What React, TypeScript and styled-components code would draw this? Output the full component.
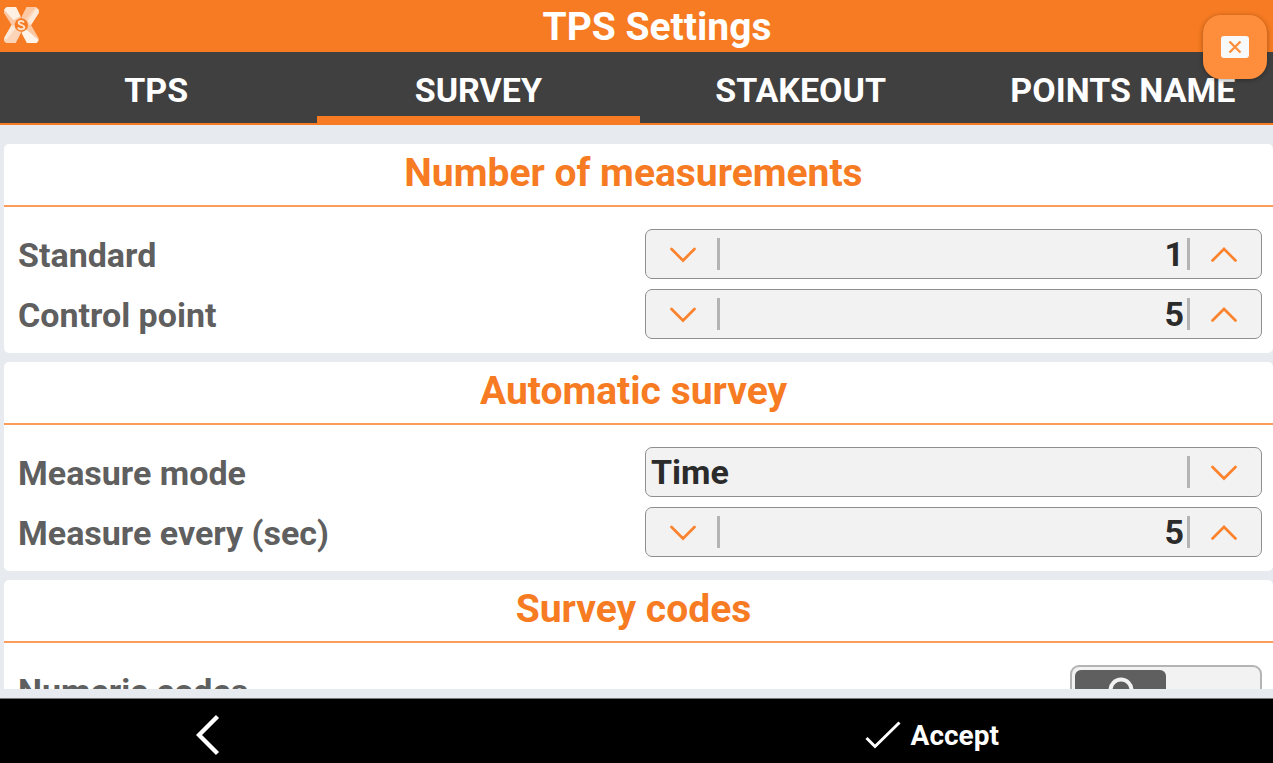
import React, { useState } from "react";
import styled, { createGlobalStyle } from "styled-components";

const orange = "#f67b22";

const GlobalStyle = createGlobalStyle`
  *, *::before, *::after { box-sizing: border-box; }
  body { margin: 0; background: #e7eaef; }
  button, input, select { font: inherit; color: inherit; margin: 0; padding: 0; border: 0; background: none; }
  button { cursor: pointer; }
`;

const Page = styled.div`
  display: flex;
  flex-direction: column;
  height: 100vh;
  overflow: hidden;
  position: relative;
  font-family: Roboto, "Liberation Sans", sans-serif;
  font-weight: 700;
  color: #5f5f5f;
`;

const Header = styled.header`
  display: flex;
  align-items: center;
  flex: none;
  height: 52px;
  padding-left: 3px;
  background: ${orange};
  color: #fff;
`;

const Title = styled.h1`
  flex: 1;
  margin: 0;
  padding-top: 2px;
  font-size: 39px;
  font-weight: 700;
  line-height: 50px;
  text-align: center;
`;

const Tabs = styled.nav`
  display: flex;
  flex: none;
  height: 73px;
  margin: 0 -11px 0 -5px;
  background: #404040;
  border-bottom: 2px solid ${orange};
`;

const Tab = styled.button<{ $active: boolean }>`
  flex: 1 1 0;
  color: #fff;
  font-size: 34px;
  line-height: 40px;
  padding-top: 11px;
  border-bottom: 7px solid ${(p) => (p.$active ? orange : "transparent")};
`;

const CloseButton = styled.button`
  position: absolute;
  top: 15px;
  right: 6px;
  width: 64px;
  height: 64px;
  display: grid;
  place-items: center;
  border-radius: 18px;
  background: #fe8e3c;
  box-shadow: 0 1px 5px rgba(0, 0, 0, 0.35);
`;

const Content = styled.main`
  flex: 1;
  min-height: 0;
  overflow: hidden;
  display: flex;
  flex-direction: column;
  gap: 9px;
  padding: 19px 0 0 4px;
`;

const Card = styled.section`
  flex: none;
  background: #fff;
  border-radius: 5px;
`;

const CardTitle = styled.h2`
  margin: 0;
  padding: 0 10px 2px 0;
  font-size: 39px;
  font-weight: 700;
  line-height: 59px;
  text-align: center;
  color: ${orange};
  border-bottom: 2px solid #fa9d5c;
`;

const Rows = styled.div`
  display: flex;
  flex-direction: column;
  gap: 10px;
  padding: 22px 11px 14px 14px;
`;

const Row = styled.div`
  display: grid;
  grid-template-columns: 1fr 1fr;
  column-gap: 10px;
  align-items: center;
  min-height: 50px;
`;

const Label = styled.label`
  padding-top: 2px;
  font-size: 34px;
  line-height: 48px;
`;

const Field = styled.div`
  display: flex;
  align-items: center;
  height: 50px;
  background: #f2f2f2;
  border: 1px solid #8f8f8f;
  border-radius: 7px;
  color: #2b2b2b;
  font-size: 34px;
`;

const ArrowButton = styled.button<{ $side: "left" | "right" }>`
  flex: none;
  width: 71px;
  height: 48px;
  display: grid;
  place-items: center;
  padding: ${(p) => (p.$side === "left" ? "1px 0 0 3px" : "1px 4px 0 0")};
`;

const Divider = styled.span`
  flex: none;
  width: 3px;
  height: 32px;
  background: #b4b4b4;
`;

const NumberInput = styled.input`
  flex: 1;
  min-width: 0;
  height: 48px;
  padding-right: 3px;
  text-align: right;
  outline: none;
`;

const Select = styled.select`
  flex: 1;
  min-width: 0;
  height: 48px;
  padding-left: 5px;
  appearance: none;
  outline: none;
`;

const SelectArrow = styled.span`
  flex: none;
  width: 71px;
  display: grid;
  place-items: center;
  padding: 1px 4px 0 0;
  pointer-events: none;
`;

const Switch = styled.span`
  position: relative;
  justify-self: end;
  width: 192px;
  height: 50px;
  padding: 3px;
  background: #f2f2f2;
  border: 2px solid #b4b4b4;
  border-radius: 9px;
`;

const SwitchInput = styled.input`
  position: absolute;
  inset: 0;
  width: 100%;
  height: 100%;
  opacity: 0;
  cursor: pointer;
`;

const Knob = styled.span<{ $on: boolean }>`
  display: grid;
  place-items: center;
  width: 50%;
  height: 100%;
  margin-left: ${(p) => (p.$on ? "50%" : "0")};
  background: #5f5f5f;
  border-radius: 6px;
`;

const Footer = styled.footer`
  display: grid;
  grid-template-columns: 1fr 1fr;
  flex: none;
  height: 65px;
  margin-top: 9px;
  background: #000;
  border-top: 1px solid #777;
  color: #fff;
`;

const BackButton = styled.button`
  display: grid;
  place-items: center;
  padding: 8px 220px 0 0;
`;

const AcceptButton = styled.button`
  display: flex;
  align-items: center;
  justify-content: center;
  gap: 10px;
  padding: 8px 46px 0 0;
  font-size: 28px;
`;

function Logo() {
  return (
    <svg width="38" height="38" viewBox="0 0 114 114" aria-hidden="true">
      <path d="M3 8 11 0H39L54 30V54H26L3 18Z" fill="#fbc8a3" />
      <path d="M3 8 11 0H39L52 28 32 40Z" fill="#fff0e4" />
      <path d="M107 8 99 0H71L56 30V54H84L107 18Z" fill="#fcd5b8" />
      <path d="M99 0H71L56 30 68 36Z" fill="#fbc8a3" />
      <path d="M107 8V18L84 54 74 42 100 4Z" fill="#fde9da" />
      <path d="M3 94 26 54H54V78L38 108H9L3 102Z" fill="#fcd5b8" />
      <path d="M3 94 26 54 38 64 10 98Z" fill="#fde9da" />
      <path d="M107 94 84 54H56V78L72 108H101L107 102Z" fill="#fbc8a3" />
      <path d="M56 78 68 66 106 98 101 108H72Z" fill="#fff3ea" />
      <circle cx="55" cy="54" r="20" fill={orange} />
      <path
        d="M63 47C60 40 47 40 47 47C47 55 64 52 64 61C64 69 48 69 45 61"
        fill="none"
        stroke="#fde0ca"
        strokeWidth="6"
      />
    </svg>
  );
}

function Chevron({ up = false }: { up?: boolean }) {
  return (
    <svg width="26" height="16" viewBox="0 0 26 16" fill="none" aria-hidden="true">
      <path
        d={up ? "M1.5 13.5 13 2 24.5 13.5" : "M1.5 2 13 13.5 24.5 2"}
        stroke="#fb832d"
        strokeWidth="2.7"
        strokeLinecap="round"
      />
    </svg>
  );
}

function NumberRow({ id, label, initial }: { id: string; label: string; initial: number }) {
  const [value, setValue] = useState(initial);
  return (
    <Row>
      <Label htmlFor={id}>{label}</Label>
      <Field>
        <ArrowButton
          type="button"
          $side="left"
          aria-label={`Decrease ${label}`}
          onClick={() => setValue(Math.max(1, value - 1))}
        >
          <Chevron />
        </ArrowButton>
        <Divider />
        <NumberInput
          id={id}
          inputMode="numeric"
          value={value}
          onChange={(e) => setValue(Number(e.target.value) || 0)}
        />
        <Divider />
        <ArrowButton type="button" $side="right" aria-label={`Increase ${label}`} onClick={() => setValue(value + 1)}>
          <Chevron up />
        </ArrowButton>
      </Field>
    </Row>
  );
}

const tabNames = ["TPS", "SURVEY", "STAKEOUT", "POINTS NAME"];

export default function App() {
  const [tab, setTab] = useState("SURVEY");
  const [numericCodes, setNumericCodes] = useState(false);

  return (
    <Page>
      <GlobalStyle />
      <Header>
        <Logo />
        <Title>TPS Settings</Title>
      </Header>
      <Tabs>
        {tabNames.map((name) => (
          <Tab key={name} type="button" $active={name === tab} onClick={() => setTab(name)}>
            {name}
          </Tab>
        ))}
      </Tabs>
      <Content>
        <Card>
          <CardTitle>Number of measurements</CardTitle>
          <Rows>
            <NumberRow id="standard" label="Standard" initial={1} />
            <NumberRow id="control" label="Control point" initial={5} />
          </Rows>
        </Card>
        <Card>
          <CardTitle>Automatic survey</CardTitle>
          <Rows>
            <Row>
              <Label htmlFor="mode">Measure mode</Label>
              <Field>
                <Select id="mode" defaultValue="Time">
                  <option>Time</option>
                  <option>Distance</option>
                </Select>
                <Divider />
                <SelectArrow>
                  <Chevron />
                </SelectArrow>
              </Field>
            </Row>
            <NumberRow id="every" label="Measure every (sec)" initial={5} />
          </Rows>
        </Card>
        <Card>
          <CardTitle>Survey codes</CardTitle>
          <Rows>
            <Row>
              <Label htmlFor="numeric">Numeric codes</Label>
              <Switch>
                <Knob $on={numericCodes}>
                  <svg width="26" height="26" viewBox="0 0 26 26" aria-hidden="true">
                    <circle cx="13" cy="13" r="10.5" fill="none" stroke="#f2f2f2" strokeWidth="4" />
                  </svg>
                </Knob>
                <SwitchInput
                  id="numeric"
                  type="checkbox"
                  checked={numericCodes}
                  onChange={(e) => setNumericCodes(e.target.checked)}
                />
              </Switch>
            </Row>
          </Rows>
        </Card>
      </Content>
      <Footer>
        <BackButton type="button" aria-label="Back">
          <svg width="24" height="42" viewBox="0 0 24 42" fill="none" aria-hidden="true">
            <path d="M21.5 2.5 3 21 21.5 39.5" stroke="#fff" strokeWidth="4.4" />
          </svg>
        </BackButton>
        <AcceptButton type="button">
          <svg width="36" height="28" viewBox="0 0 36 28" fill="none" aria-hidden="true">
            <path d="M1.5 17 10 25.5 34.5 1.5" stroke="#fff" strokeWidth="3" />
          </svg>
          Accept
        </AcceptButton>
      </Footer>
      <CloseButton type="button" aria-label="Close">
        <svg width="28" height="22" viewBox="0 0 28 22" aria-hidden="true">
          <rect width="28" height="22" rx="3" fill="#f8f9fb" />
          <path d="M8.5 5.5 19.5 16.5M19.5 5.5 8.5 16.5" stroke="#fe8e3c" strokeWidth="2.4" />
        </svg>
      </CloseButton>
    </Page>
  );
}
